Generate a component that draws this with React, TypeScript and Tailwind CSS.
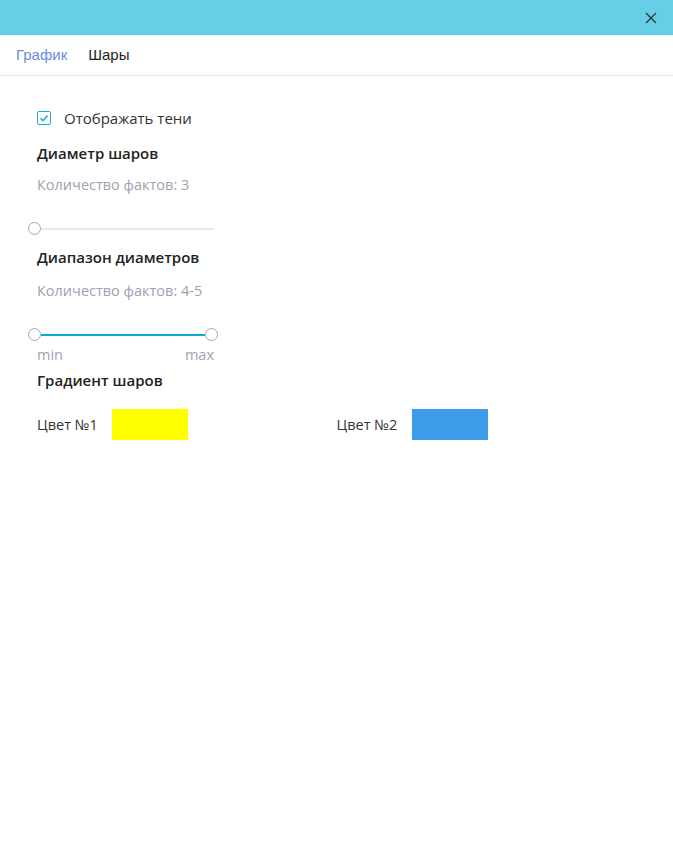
import { useState } from "react"

function Thumb() {
  return <div className="h-[13px] w-[13px] shrink-0 rounded-full border border-[#a8a8a8] bg-white" />
}

export default function App() {
  const [shadows, setShadows] = useState(true)
  const [tab, setTab] = useState("shary")

  return (
    <div className="flex h-[859px] w-[673px] flex-col bg-white font-['Open_Sans',sans-serif] text-[#222]">
      <div className="flex h-[35px] shrink-0 items-center justify-end bg-[#66cfe8] pr-[15px]">
        <button className="flex h-[14px] w-[14px] items-center justify-center text-[#333]">
          <svg width="12" height="12" viewBox="0 0 12 12" fill="none" stroke="currentColor" strokeWidth="1.3">
            <path d="M1 1L11 11M11 1L1 11" />
          </svg>
        </button>
      </div>

      <div className="flex h-[41px] shrink-0 items-center gap-[21px] border-b border-[#e6e6e6] px-[16px] font-['Liberation_Sans',Arial,sans-serif] text-[15px]">
        <button onClick={() => setTab("grafik")} className="text-[#6b8de0]">График</button>
        <button onClick={() => setTab("shary")} className={tab === "shary" ? "text-[#222]" : "text-[#6b8de0]"}>Шары</button>
      </div>

      <div className="flex flex-col px-[37px] pt-[32px]">
        <label className="flex h-[20px] cursor-pointer items-center gap-[13px] text-[15px] text-[#333]">
          <span
            onClick={() => setShadows(!shadows)}
            className="flex h-[14px] w-[14px] items-center justify-center rounded-[2px] border border-[#1aaed2] bg-white"
          >
            {shadows && (
              <svg width="10" height="10" viewBox="0 0 10 10" fill="none" stroke="#1aaed2" strokeWidth="1.5">
                <path d="M1.5 5.2L4 7.6L8.6 2.6" />
              </svg>
            )}
          </span>
          Отображать тени
        </label>

        <div className="mt-[15px] text-[15px] font-semibold leading-[20px] text-[#222]">Диаметр шаров</div>
        <div className="mt-[12px] text-[14.5px] leading-[20px] text-[#9ca2b2]">Количество фактов: 3</div>

        <div className="ml-[-9px] mt-[27px] flex w-[186px] items-center">
          <Thumb />
          <div className="h-[2px] flex-1 bg-[#e8e8e8]" />
        </div>

        <div className="mt-[12px] text-[15px] font-semibold leading-[20px] text-[#222]">Диапазон диаметров</div>
        <div className="mt-[14px] text-[14.5px] leading-[20px] text-[#9ca2b2]">Количество фактов: 4-5</div>

        <div className="ml-[-9px] mt-[27px] flex w-[190px] items-center">
          <Thumb />
          <div className="h-[2px] flex-1 bg-[#10aad6]" />
          <Thumb />
        </div>
        <div className="mt-[5px] flex w-[177px] justify-between text-[14.5px] leading-[18px] text-[#9ca2b2]">
          <span>min</span>
          <span>max</span>
        </div>

        <div className="mt-[6px] text-[15px] font-semibold leading-[20px] text-[#222]">Градиент шаров</div>

        <div className="mt-[19px] flex">
          <div className="flex w-[300px] items-center">
            <span className="w-[75px] text-[14.5px] text-[#333]">Цвет №1</span>
            <div className="h-[31px] w-[76px] bg-[#ffff00]" />
          </div>
          <div className="flex w-[300px] items-center">
            <span className="w-[75px] text-[14.5px] text-[#333]">Цвет №2</span>
            <div className="h-[31px] w-[76px] bg-[#3d9be9]" />
          </div>
        </div>
      </div>
    </div>
  )
}
